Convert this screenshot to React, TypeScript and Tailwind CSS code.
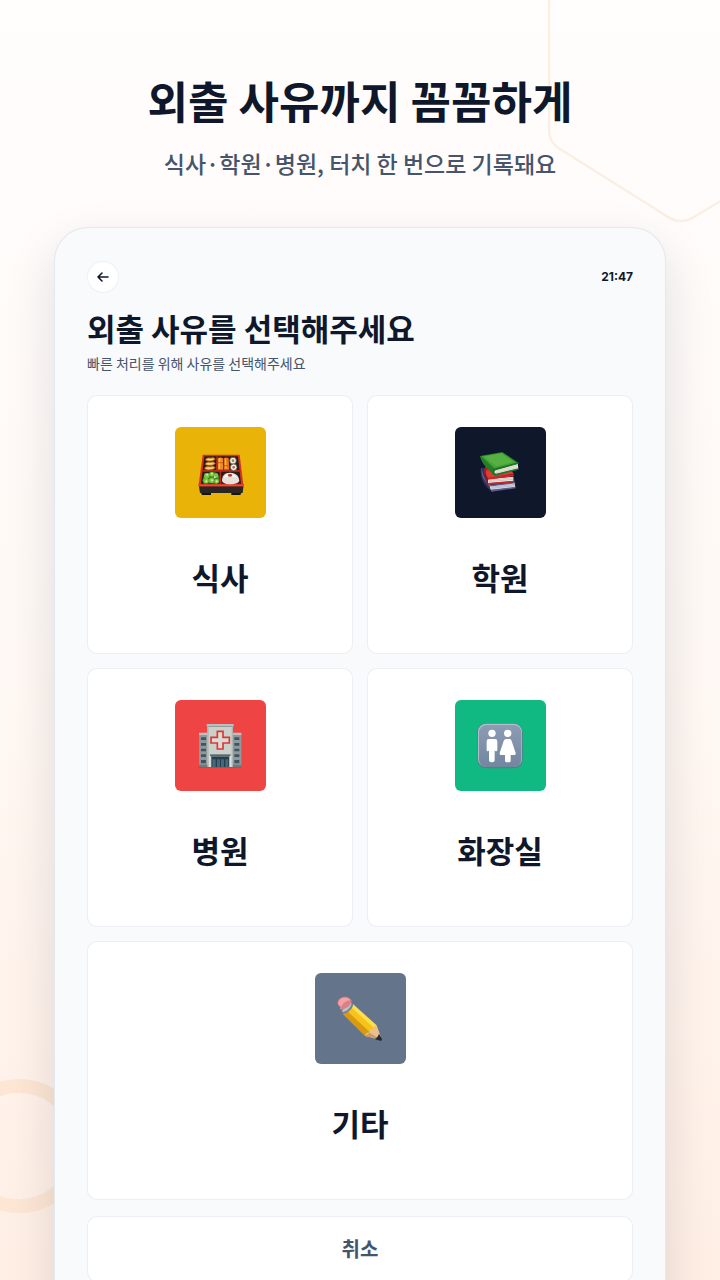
import type { ReactNode } from "react";

type Reason = {
  id: string;
  label: string;
  tileClass: string;
  cardClass: string;
  icon: ReactNode;
};

const BentoIcon = () => (
  <svg viewBox="0 6 180 180" className="size-15" aria-hidden="true">
    <path d="M31 150h32v12H36zM124 150h32l-5 12h-27z" fill="#17130f" />
    <path d="M26 130h135l-3 26H30z" fill="#2b2523" />
    <path d="M38 41h111l11 90v5H26v-5z" fill="#d8321f" />
    <path d="M43 46h101l9 82H33z" fill="#2a1d18" />
    <path d="M79 46h4l-1 41h70v5H93l1 36h-5V92H37l1-5h40z" fill="#b52c1e" />
    <g fill="#efb14a" stroke="#8a4f18" strokeWidth="2">
      <path d="M46 57c2-7 10-8 16-6 5-3 12-2 14 4-7 7-22 8-30 2z" />
      <path d="M45 70c2-7 10-8 16-6 6-3 12-2 15 4-7 7-23 8-31 2z" />
      <path d="M43 83c3-7 10-8 17-6 6-3 13-2 16 4-7 7-24 8-33 2z" />
    </g>
    <g fill="#ffe3a2">
      <path d="M53 54h15v3H53zM52 67h16v3H52zM50 80h18v3H50z" />
    </g>
    <path d="M83 52q8-5 16 0l1 34H83z" fill="#f28a22" />
    <path d="M101 52q7-5 15 0l2 34h-16z" fill="#e8761c" />
    <path d="M87 52h4l-1 31h-4zM105 53h3l2 30h-4z" fill="#ffc25e" />
    <path d="M83 64h16v3H83zM101 73h17v3h-17z" fill="#c65b16" />
    <g stroke="#494540" strokeWidth="2">
      <circle cx="129" cy="59" r="10" fill="#f4eee2" />
      <circle cx="131" cy="79" r="10" fill="#f4eee2" />
    </g>
    <circle cx="129" cy="59" r="4" fill="#81945a" />
    <circle cx="131" cy="79" r="4" fill="#b86950" />
    <path d="M40 109l7-12 12-2 10-3 12 4 7 11 1 16-12 6-18-2-15 3-7-10z" fill="#3d831f" />
    <g fill="#79c843">
      <circle cx="50" cy="104" r="8" />
      <circle cx="65" cy="100" r="7" />
      <circle cx="78" cy="104" r="7" />
      <circle cx="48" cy="119" r="8" />
      <circle cx="65" cy="118" r="8" />
      <circle cx="80" cy="121" r="7" />
    </g>
    <g fill="#d9edaa">
      <circle cx="52" cy="101" r="3" />
      <circle cx="66" cy="98" r="3" />
      <circle cx="74" cy="109" r="3" />
      <circle cx="66" cy="118" r="3" />
      <circle cx="49" cy="121" r="3" />
      <circle cx="80" cy="121" r="3" />
    </g>
    <path d="M96 120c0-15 7-25 24-25 19 0 27 11 28 25-5 12-46 15-52 0z" fill="#e8dedb" />
    <path d="M102 112c1-9 8-14 18-14s18 5 21 12c-10-4-27-5-39 2z" fill="#fff9f6" />
    <ellipse cx="120" cy="103" rx="7" ry="4" fill="#b43a26" />
    <path d="M26 131h135v5H26z" fill="#ef4932" />
  </svg>
);

const BooksIcon = () => (
  <svg viewBox="0 6 180 180" className="size-15" aria-hidden="true">
    <path d="M33 80l16 2 84 34 4 12-72 24c-19-15-37-38-32-72z" fill="#31345d" />
    <path d="M33 80l5 28 26 38v-11l-22-27z" fill="#62649c" />
    <path d="M62 134l72-9 2 14-72 8c-5-4-5-9-2-13z" fill="#dcdbe3" />
    <path d="M64 138l71-8M64 142l71-8" stroke="#a7a7b9" strokeWidth="2" />
    <path d="M60 133l73-9 3 3-72 9zM63 146l73-8 1 4-73 10z" fill="#5e5d92" />
    <path d="M46 76l79 14 7 8-79 14c-11-9-13-20-7-36z" fill="#b91f20" />
    <path d="M50 87l76 4 3 7-75 13-7-15z" fill="#dc3c34" />
    <path d="M53 115l77-8v14l-76 6c-4-3-5-8-1-12z" fill="#efebe3" />
    <path d="M55 118l75-8M55 122l75-7" stroke="#b9b2ab" strokeWidth="2" />
    <path d="M52 111l79-12v7l-78 10zM53 126l78-7v5l-77 7z" fill="#c72828" />
    <path d="M46 77c-5 18-2 39 8 54v-16c-7-12-9-23-8-38z" fill="#8e161d" />
    <path d="M30 45l67-12 48 32-69 22c-4 3-4 9 0 15-21-11-43-37-46-57z" fill="#237d2a" />
    <path d="M34 46l62-11 44 30-65 19z" fill="#47a337" />
    <path d="M42 47l52-10 36 26-51 13z" fill="#5fbc49" opacity=".6" />
    <path d="M75 87l68-19c2 6 1 10 2 15l-68 17c-6-3-6-9-2-13z" fill="#f1f0e6" />
    <path d="M77 91l66-18M77 96l66-17" stroke="#b8bdac" strokeWidth="2" />
    <path d="M74 82l71-18 1 4-69 20c-5 3-5 8 1 10l67-16 1 4-69 18c-15-2-17-13-3-22z" fill="#1d7529" />
  </svg>
);

const HospitalIcon = () => (
  <svg viewBox="0 0 180 180" className="size-15" aria-hidden="true">
    <path d="M27 54h28v101H27zM126 54h28v101h-28z" fill="#8e999b" />
    <path d="M27 50h28v7H27zM126 50h28v7h-28z" fill="#bcc1bf" />
    <path d="M52 30h77v125H52z" fill="#ccd0cb" />
    <path d="M50 24h81v7H50z" fill="#b9bfbc" />
    <path d="M52 30h77v3H52z" fill="#929b99" />
    <path d="M52 31h4v124h-4zM125 31h4v124h-4z" fill="#aeb6b4" />
    <g fill="#405461">
      <path d="M33 64h15v8H33zM33 81h15v8H33zM33 98h15v8H33zM33 115h15v8H33zM33 132h15v10H33z" />
      <path d="M133 64h15v8h-15zM133 81h15v8h-15zM133 98h15v8h-15zM133 115h15v8h-15zM133 132h15v10h-15z" />
    </g>
    <path
      d="M82 46h17v18h19v17H99v18H82V81H63V64h19z"
      fill="#dcdad4"
      stroke="#d63a39"
      strokeWidth="5"
    />
    <path d="M60 115h62v7H60z" fill="#566872" />
    <path d="M64 122h54v33H64z" fill="#263e4c" />
    <path d="M67 130h10v24H67zM81 130h9v24h-9zM93 130h9v24h-9zM106 130h9v24h-9z" fill="#45687b" />
    <path d="M57 119h5v36h-5zM119 119h5v36h-5z" fill="#dee0db" />
    <path d="M27 146h25v9H27zM129 146h25v9h-25z" fill="#6e7c79" />
    <path d="M25 153h131v3H25z" fill="#626d6c" />
  </svg>
);

const RestroomIcon = () => (
  <svg viewBox="0 0 180 180" className="size-15" aria-hidden="true">
    <defs>
      <linearGradient id="restroom-plate" x1="0" y1="0" x2="0" y2="1">
        <stop stopColor="#8d9bb4" />
        <stop offset="1" stopColor="#72869f" />
      </linearGradient>
    </defs>
    <rect x="22" y="22" width="136" height="135" rx="27" fill="#607889" />
    <rect x="24" y="23" width="132" height="130" rx="25" fill="#b2bdce" />
    <rect x="27" y="27" width="127" height="126" rx="23" fill="url(#restroom-plate)" />
    <g fill="#fff">
      <circle cx="66" cy="52" r="11" />
      <path d="M57 69h18q7 0 7 7v26q0 4-4 4-3 0-4-3v30q0 6-7 6h-3q-7 0-7-6v-30q-1 3-4 3-3 0-3-4V76q0-7 7-7z" />
      <circle cx="113" cy="52" r="11" />
      <path d="M108 69h11q4 0 6 6l12 36q1 5-3 6h-12v17q0 5-5 5h-7q-5 0-5-5v-17H92q-4-1-3-6l12-36q2-6 7-6z" />
    </g>
  </svg>
);

const PencilIcon = () => (
  <svg viewBox="15 7 180 180" className="size-15" aria-hidden="true">
    <path d="M84 52l71 64-10 11-75-66z" fill="#ffdd4c" />
    <path d="M74 58l73 66-14 15-74-65z" fill="#f6c31c" />
    <path d="M63 70l71 66-14 12-67-66z" fill="#d99a12" />
    <path d="M155 116c-5 1-9 5-10 10-8 0-11 5-12 12-7-1-11 3-13 10l45 11 4-4z" fill="#eac08d" />
    <path d="M120 148l14-10 32 20z" fill="#cf9a66" />
    <path d="M162 141l9 16c1 4-2 6-6 5l-16-5c6-3 11-9 13-16z" fill="#282c30" />
    <path d="M66 43l19 9c-1 13-15 28-32 30l-8-18z" fill="#778491" />
    <path d="M64 43l6 2c-2 12-10 20-22 23l-3-4zM75 47l5 3c-3 13-13 23-25 26l-4-4z" fill="#b9c4cb" />
    <path d="M40 56c-7-12 3-25 19-26 10 0 19 6 21 13-3 13-14 23-29 25z" fill="#db7f88" />
    <path d="M41 54c-4-11 6-22 20-21 7 0 13 3 15 8-12 1-23 8-27 20z" fill="#f5a2a5" />
  </svg>
);

const REASONS: Reason[] = [
  { id: "meal", label: "식사", tileClass: "bg-[#eab308]", cardClass: "", icon: <BentoIcon /> },
  { id: "academy", label: "학원", tileClass: "bg-slate-900", cardClass: "", icon: <BooksIcon /> },
  { id: "hospital", label: "병원", tileClass: "bg-[#ef4444]", cardClass: "", icon: <HospitalIcon /> },
  { id: "restroom", label: "화장실", tileClass: "bg-[#10b981]", cardClass: "", icon: <RestroomIcon /> },
  { id: "etc", label: "기타", tileClass: "bg-[#64748b]", cardClass: "col-span-2", icon: <PencilIcon /> },
];

const ReasonCard = ({ label, tileClass, cardClass, icon }: Reason) => (
  <button
    type="button"
    className={`flex flex-col items-center gap-[39px] rounded-[10px] border border-slate-200/70 bg-white pt-[31px] pb-14 ${cardClass}`}
  >
    <span className={`flex size-[91px] items-center justify-center rounded-md ${tileClass}`}>
      {icon}
    </span>
    <span className="text-[31px] leading-10 font-bold">{label}</span>
  </button>
);

const Backdrop = () => (
  <div className="pointer-events-none absolute inset-0 -z-10" aria-hidden="true">
    <svg viewBox="0 0 172 224" className="absolute top-0 right-0 h-56 w-43" fill="none">
      <path
        d="M1 -4V130Q1 143 12 149L117 215Q132 226 146 217L176 199"
        stroke="#f9efe4"
        strokeWidth="2.5"
      />
    </svg>
    <div className="absolute bottom-[67px] -left-12 size-[134px] rounded-full border-14 border-[#fde6d3]" />
  </div>
);

export default function App() {
  return (
    <main className="relative isolate flex h-screen flex-col overflow-hidden bg-linear-to-b from-[#fffdfd] via-[#fff9f5] to-[#ffefe5] font-['Noto_Sans_CJK_KR',sans-serif] text-slate-900">
      <Backdrop />

      <header className="flex flex-col items-center gap-4 pt-[70px] pb-[47px] text-center">
        <h1 className="text-[44px] leading-[60px] font-bold">외출 사유까지 꼼꼼하게</h1>
        <p className="text-[23px] leading-[34px] font-medium text-slate-600">
          식사·학원·병원, 터치 한 번으로 기록돼요
        </p>
      </header>

      <section className="mx-[54px] flex shrink-0 flex-col rounded-t-[34px] border border-b-0 border-slate-200 bg-slate-50 px-8 pt-[33px] pb-8 shadow-[0_20px_50px_rgba(15,23,42,0.13)]">
        <div className="flex items-center justify-between">
          <button
            type="button"
            aria-label="뒤로"
            className="flex size-8 items-center justify-center rounded-full border border-slate-200/60 bg-white"
          >
            <svg
              viewBox="0 0 14 14"
              className="size-3.5"
              fill="none"
              stroke="currentColor"
              strokeWidth="1.6"
              strokeLinecap="round"
              strokeLinejoin="round"
              aria-hidden="true"
            >
              <path d="M12 7H2M6 3L2 7l4 4" />
            </svg>
          </button>
          <time className="font-['Inter',sans-serif] text-xs font-bold">21:47</time>
        </div>

        <h2 className="mt-3.5 text-[31px] leading-[42px] font-bold">외출 사유를 선택해주세요</h2>
        <p className="mt-1 text-sm text-slate-600">빠른 처리를 위해 사유를 선택해주세요</p>

        <div className="mt-[22px] grid grid-cols-2 gap-3.5">
          {REASONS.map((reason) => (
            <ReasonCard key={reason.id} {...reason} />
          ))}
        </div>

        <button
          type="button"
          className="mt-4 rounded-[10px] border border-slate-200/70 bg-white py-4 text-xl leading-8 font-bold text-slate-600"
        >
          취소
        </button>
      </section>
    </main>
  );
}
